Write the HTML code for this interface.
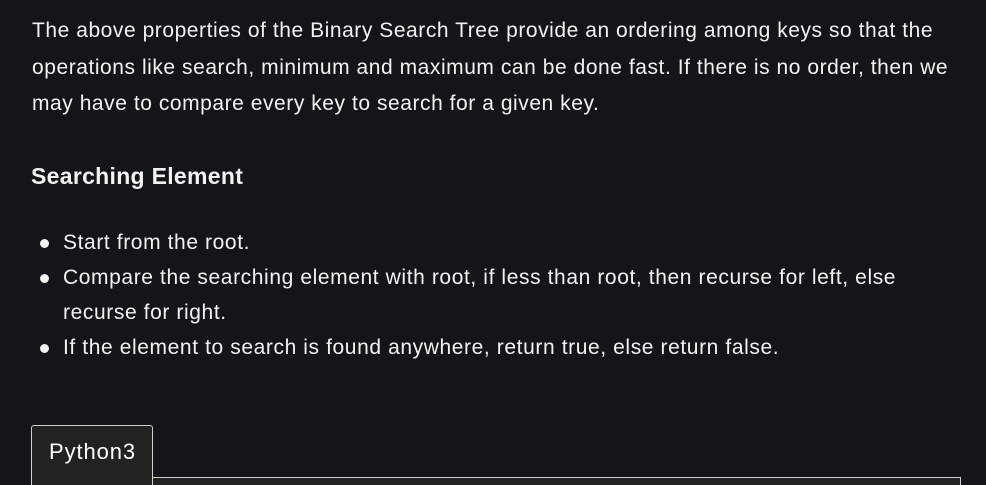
<!DOCTYPE html>
<html style="overflow:hidden"><head><style>
html,body{margin:0;background:#141519;width:986px;height:485px;overflow:hidden}
body{font-family:"Liberation Sans",sans-serif;color:#f2f2f2;position:relative}
.p{position:absolute;left:32px;top:13px;font-size:21px;line-height:36.5px;white-space:nowrap;letter-spacing:0.55px}
h3{position:absolute;left:31px;top:161px;margin:0;font-size:23px;font-weight:bold;line-height:30px;letter-spacing:0.3px}
ul{position:absolute;left:0;top:225px;margin:0;padding-left:63px;font-size:21px;line-height:35px;white-space:nowrap;letter-spacing:0.6px}
li{list-style:none;position:relative}
li:before{content:"";position:absolute;left:-23px;top:14px;width:9px;height:9px;border-radius:50%;background:#f2f2f2}
.tab{position:absolute;left:31px;top:425px;width:120px;height:80px;background:#222220;border:1px solid #cfcfcf;border-bottom:none;border-radius:3px 3px 0 0;z-index:2}
.tab span{position:absolute;left:17px;top:13px;font-size:22px;letter-spacing:0.9px;color:#fff}
.box{position:absolute;left:31px;top:477px;width:928px;height:30px;background:#222220;border:1px solid #cfcfcf}
</style></head><body>
<div class="p">The above properties of the Binary Search Tree provide an ordering among keys so that the<br>operations like search, minimum and maximum can be done fast. If there is no order, then we<br>may have to compare every key to search for a given key.</div>
<h3>Searching Element</h3>
<ul>
<li>Start from the root.</li>
<li>Compare the searching element with root, if less than root, then recurse for left, else<br>recurse for right.</li>
<li>If the element to search is found anywhere, return true, else return false.</li>
</ul>
<div class="box"></div>
<div class="tab"><span>Python3</span></div>
</body></html>
